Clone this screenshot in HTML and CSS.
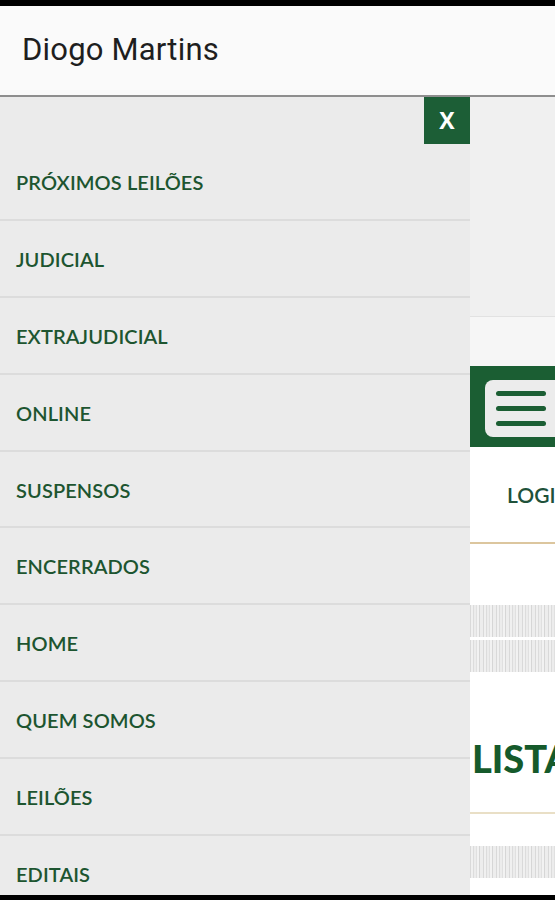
FILE: index.html
```html
<!DOCTYPE html>
<html lang="pt">
<head>
<meta charset="utf-8">
<title>Diogo Martins</title>
<link rel="stylesheet" href="styles.css">
</head>
<body>
<div class="screen">
  <div class="statusbar"></div>
  <header class="appbar"><h1 class="title">Diogo Martins</h1></header>
  <div class="main">
    <nav class="drawer">
      <div class="close-row"><button class="close">X</button></div>
      <ul class="menu">
        <li class="item">PRÓXIMOS LEILÕES</li>
        <li class="item">JUDICIAL</li>
        <li class="item">EXTRAJUDICIAL</li>
        <li class="item">ONLINE</li>
        <li class="item">SUSPENSOS</li>
        <li class="item">ENCERRADOS</li>
        <li class="item">HOME</li>
        <li class="item">QUEM SOMOS</li>
        <li class="item">LEILÕES</li>
        <li class="item">EDITAIS</li>
      </ul>
    </nav>
    <section class="page">
      <div class="page-top"></div>
      <div class="page-band"></div>
      <div class="burger-bar">
        <div class="burger">
          <span class="line"></span><span class="line"></span><span class="line"></span>
        </div>
      </div>
      <div class="login">LOGIN</div>
      <div class="gap1"></div>
      <div class="stripes"></div>
      <div class="stripe-gap"></div>
      <div class="stripes"></div>
      <div class="lista">LISTA</div>
      <div class="gap2"></div>
      <div class="stripes"></div>
      <div class="page-end"></div>
    </section>
  </div>
  <div class="navbar"></div>
</div>
</body>
</html>
```
FILE: styles.css
```css
* { box-sizing: border-box; }
html, body { margin: 0; padding: 0; }
body { width: 555px; height: 900px; overflow: hidden; background: #000; font-family: Lato, "Open Sans", sans-serif; }
.screen { display: flex; flex-direction: column; height: 900px; }
.statusbar { height: 6px; background: #000; flex: none; }
.appbar {
  height: 91px; flex: none; background: #fafafa;
  border-bottom: 2px solid #8e8e8e;
  display: flex; align-items: center; padding-left: 22px;
}
.title {
  margin: 0; padding-bottom: 2px;
  font-family: Roboto, "Noto Sans", sans-serif; font-weight: 400;
  font-size: 31px; color: #1e1e1e; letter-spacing: 0.2px;
}
.main { display: flex; height: 798px; flex: none; overflow: hidden; }
.drawer { width: 470px; flex: none; background: #ebebeb; display: flex; flex-direction: column; }
.close-row { display: flex; justify-content: flex-end; height: 47px; }
.close {
  width: 46px; height: 47px; border: 0; margin: 0; padding: 0;
  background: #1c5e36; color: #fff;
  font-family: "Open Sans", Lato, sans-serif; font-weight: 700; font-size: 23px; line-height: 47px;
}
.menu { list-style: none; margin: 0; padding: 0; }
.item {
  height: 76.9px; border-bottom: 2px solid #dcdcdc;
  display: flex; align-items: center; padding-left: 16px; padding-top: 1px;
  font-family: Lato, sans-serif; font-weight: 600; font-size: 20px; color: #1d5530; letter-spacing: 0.1px;
}
.page { width: 85px; flex: none; background: #fff; display: flex; flex-direction: column; overflow: hidden; }
.page-top { height: 220px; background: #f0f0f0; border-bottom: 1px solid #e2e2e2; flex: none; }
.page-band { height: 49px; background: #f6f6f6; flex: none; }
.burger-bar { height: 81px; background: #1b5e33; flex: none; padding: 14px 0 10px 15px; }
.burger {
  width: 82px; height: 57px; background: #ececec; border-radius: 8px;
  display: flex; flex-direction: column; justify-content: center; gap: 10px; padding-left: 11px;
}
.line { display: block; width: 50px; height: 5px; border-radius: 3px; background: #1b5e33; }
.login {
  height: 97px; flex: none; border-bottom: 2px solid #dcc69e;
  display: flex; align-items: center; padding-left: 37px;
  font-family: Lato, sans-serif; font-weight: 600; font-size: 21px; color: #20513a; white-space: nowrap;
}
.gap1 { height: 61px; flex: none; }
.stripes {
  height: 32px; flex: none; background-color: #ececec;
  background-image: repeating-linear-gradient(90deg, #d9d9d9 0 1px, #f0f0f0 1px 3px, #dcdcdc 3px 4px, #ececec 4px 6px, #e0e0e0 6px 7px, #f2f2f2 7px 9px, #d6d6d6 9px 10px, #ededed 10px 13px);
}
.stripe-gap { height: 3px; flex: none; }
.lista {
  height: 142px; flex: none; border-bottom: 2px solid #e9dfc6;
  display: flex; align-items: center; padding-left: 2px; padding-top: 32px;
  font-family: Lato, sans-serif; font-weight: 900; font-size: 38px; color: #155a2b; white-space: nowrap;
}
.gap2 { height: 32px; flex: none; }
.page-end { flex: 1; }
.navbar { height: 5px; background: #000; flex: none; }
```
